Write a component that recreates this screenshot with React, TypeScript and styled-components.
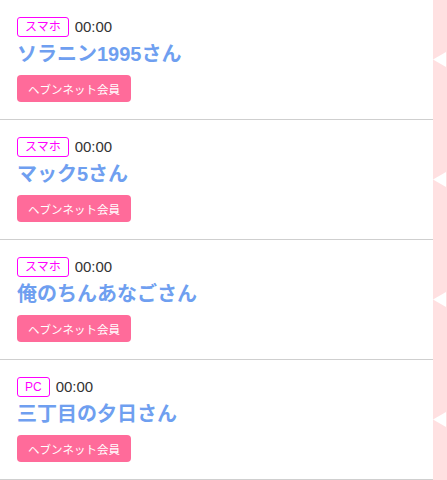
import React from "react";
import styled, { createGlobalStyle } from "styled-components";

interface Visitor {
	device: string;
	time: string;
	name: string;
}

const visitors: Visitor[] = [
	{ device: "スマホ", time: "00:00", name: "ソラニン1995さん" },
	{ device: "スマホ", time: "00:00", name: "マック5さん" },
	{ device: "スマホ", time: "00:00", name: "俺のちんあなごさん" },
	{ device: "PC", time: "00:00", name: "三丁目の夕日さん" },
];

const GlobalStyle = createGlobalStyle`
	body {
		margin: 0;
		background: #fff;
		font-family: "Liberation Sans", "Noto Sans CJK JP", sans-serif;
	}
`;

const List = styled.ul`
	list-style: none;
	margin: 0;
	padding: 0;
	width: 447px;
`;

const Item = styled.li`
	display: flex;
	height: 120px;
`;

const Content = styled.div`
	flex: 1;
	min-width: 0;
	box-sizing: border-box;
	padding: 17px 17px 0;
	border-bottom: 1px solid #cfcfcf;
`;

const TopRow = styled.div`
	display: flex;
	align-items: center;
	gap: 6px;
	height: 20px;
`;

const DeviceTag = styled.span`
	box-sizing: border-box;
	display: inline-flex;
	align-items: center;
	justify-content: center;
	height: 20px;
	padding: 0 7px;
	border: 1px solid #f0f;
	border-radius: 3px;
	color: #f0f;
	font-size: 12px;
	line-height: 1;
`;

const Time = styled.span`
	color: #333;
	font-size: 15px;
	line-height: 20px;
`;

const Name = styled.div`
	margin-top: 4px;
	color: #6f9ff0;
	font-size: 20px;
	font-weight: bold;
	line-height: 26px;
`;

const MemberButton = styled.button`
	display: block;
	margin-top: 8px;
	width: 114px;
	height: 27px;
	padding: 0;
	border: none;
	border-radius: 4px;
	background: #ff6b9a;
	color: #fff;
	font-family: inherit;
	font-size: 11.5px;
	cursor: pointer;
`;

const Strip = styled.div`
	flex: 0 0 14px;
	width: 14px;
	background: #ffe0e1;
	display: flex;
	align-items: center;

	svg {
		display: block;
		flex: none;
		margin-top: -2px;
	}
`;

const Arrow: React.FC = () => (
	<svg width="13" height="15" viewBox="0 0 13 15">
		<polygon points="0,7.5 13,0 13,15" fill="#fff" />
	</svg>
);

const App: React.FC = () => {
	return (
		<>
			<GlobalStyle />
			<List>
				{visitors.map((v, i) => (
					<Item key={i}>
						<Content>
							<TopRow>
								<DeviceTag>{v.device}</DeviceTag>
								<Time>{v.time}</Time>
							</TopRow>
							<Name>{v.name}</Name>
							<MemberButton>ヘブンネット会員</MemberButton>
						</Content>
						<Strip>
							<Arrow />
						</Strip>
					</Item>
				))}
			</List>
		</>
	);
};

export default App;
